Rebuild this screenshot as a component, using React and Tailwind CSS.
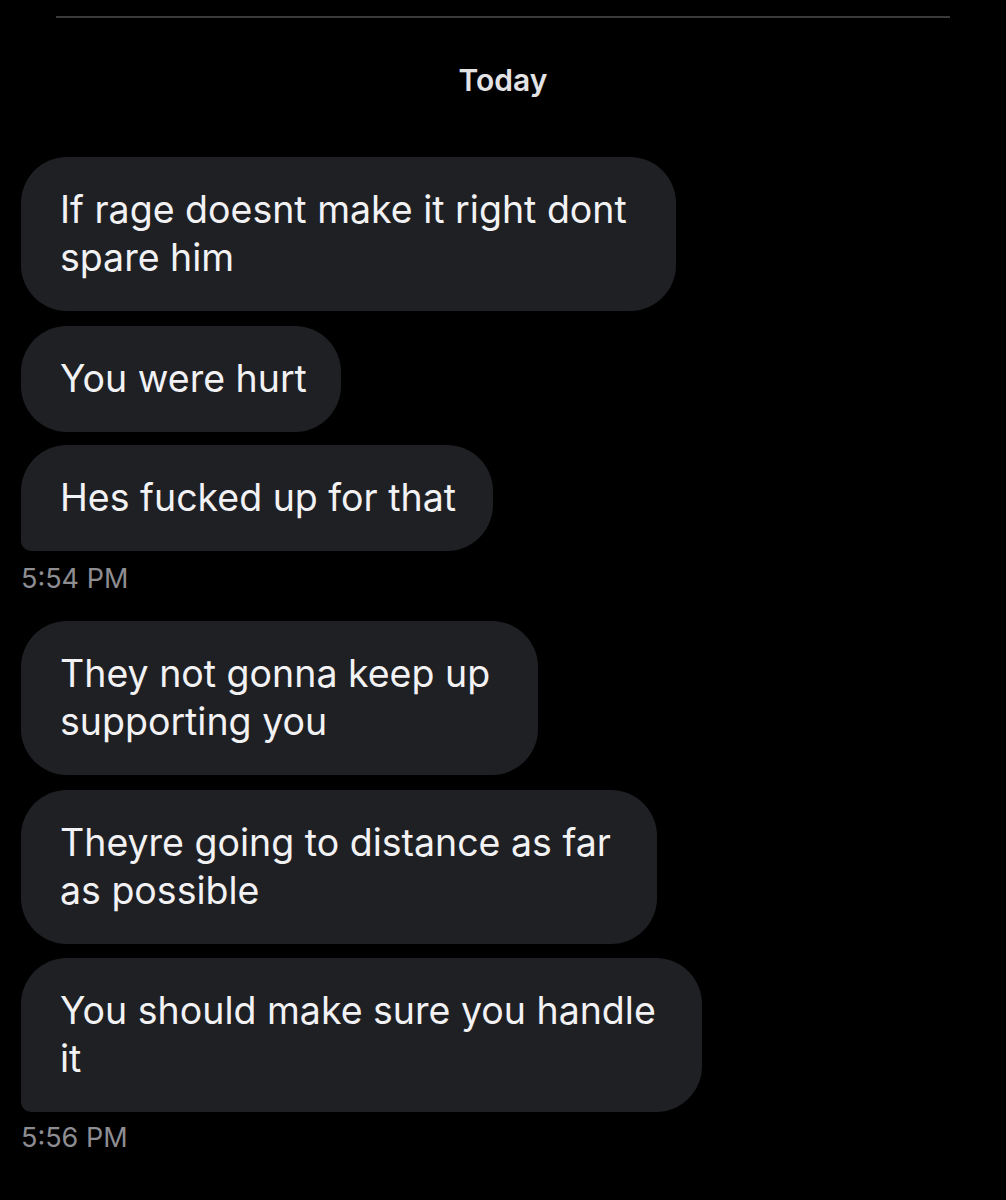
import React from 'react';

const font = { fontFamily: 'Inter, "Liberation Sans", sans-serif' };

const Bubble = ({ lines, width, last, className = '' }) => (
  <div
    className={`bg-[#1f2024] text-[#f2f2f4] text-[37.5px] leading-[48px] pl-[39px] py-[29px] rounded-[46px] ${
      last ? 'rounded-bl-[10px]' : ''
    } ${width} ${className}`}
  >
    {lines.map((l, i) => (
      <div key={i} className="whitespace-nowrap">
        {l}
      </div>
    ))}
  </div>
);

const Time = ({ children, className = '' }) => (
  <div className={`text-[#8d8d92] text-[27px] leading-[30px] ${className}`}>{children}</div>
);

export default function App() {
  return (
    <div className="bg-black min-h-[1200px] w-[1006px] overflow-hidden" style={font}>
      <div className="mx-[56px] pt-[16px]">
        <div className="h-[2px] bg-[#3a3a3d]" />
      </div>

      <div className="mt-[44px] text-center text-[#e3e3e6] text-[30px] leading-[36px] font-semibold">
        Today
      </div>

      <div className="flex flex-col items-start px-[21px] mt-[59px]">
        <Bubble width="w-[655px]" lines={['If rage doesnt make it right dont', 'spare him']} />
        <Bubble width="w-[320px]" className="mt-[15px]" lines={['You were hurt']} />
        <Bubble width="w-[472px]" className="mt-[13px]" last lines={['Hes fucked up for that']} />
        <Time className="mt-[13px]">5:54 PM</Time>

        <Bubble width="w-[517px]" className="mt-[27px]" lines={['They not gonna keep up', 'supporting you']} />
        <Bubble width="w-[636px]" className="mt-[15px]" lines={['Theyre going to distance as far', 'as possible']} />
        <Bubble width="w-[681px]" className="mt-[14px]" last lines={['You should make sure you handle', 'it']} />
        <Time className="mt-[11px]">5:56 PM</Time>
      </div>
    </div>
  );
}
